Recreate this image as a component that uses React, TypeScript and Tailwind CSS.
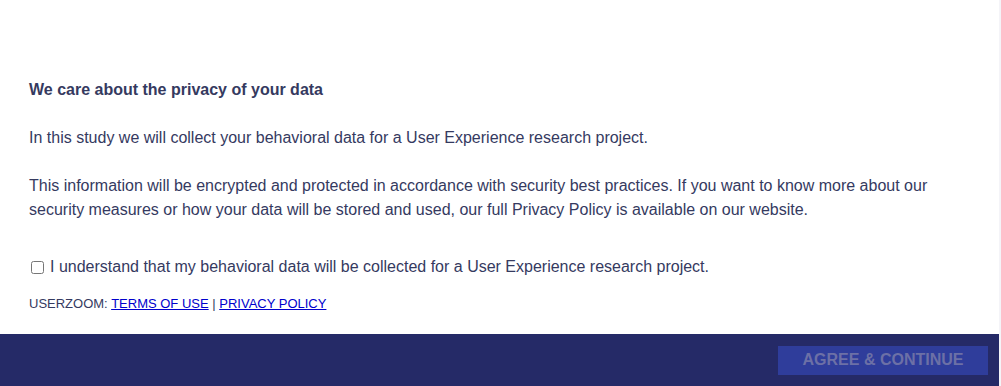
export default function App() {
  return (
    <div className="flex h-[386px] w-[1001px] bg-[#f4f4f8] font-['Liberation_Sans',Arial,sans-serif] text-[#353a5f]">
      <div className="flex w-[999px] flex-col bg-white">
        <div className="flex-1 pl-[29px] pr-6 pt-[78px]">
          <h1 className="text-[16px] font-bold leading-6">We care about the privacy of your data</h1>
          <p className="mt-6 text-[16px] leading-6">
            In this study we will collect your behavioral data for a User Experience research project.
          </p>
          <p className="mt-6 max-w-[930px] text-[16px] leading-6">
            This information will be encrypted and protected in accordance with security best practices. If you want to know more about our security measures or how your data will be stored and used, our full Privacy Policy is available on our website.
          </p>
          <label className="mt-[33px] flex items-center text-[16px] leading-6">
            <input type="checkbox" className="ml-[2px] mr-[6px] h-[13px] w-[13px]" />
            I understand that my behavioral data will be collected for a User Experience research project.
          </label>
          <div className="mt-[17px] text-[13px] leading-4">
            USERZOOM:{" "}
            <a href="#" className="text-[#0000cc] underline">TERMS OF USE</a>
            {" | "}
            <a href="#" className="text-[#0000cc] underline">PRIVACY POLICY</a>
          </div>
        </div>
        <div className="flex h-[52px] items-center justify-end bg-[#252a67] pr-[11px]">
          <button className="h-[29px] w-[210px] bg-[#2f3d9b] text-[16px] font-bold uppercase text-[#6c70a6]">
            Agree &amp; Continue
          </button>
        </div>
      </div>
    </div>
  );
}
